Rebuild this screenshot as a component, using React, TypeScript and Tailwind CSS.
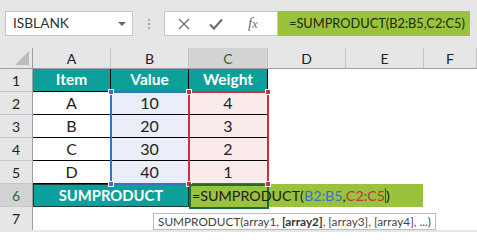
import React from 'react';

const cols = ['A', 'B', 'C', 'D', 'E', 'F'];

const body = [
    ['Item', 'Value', 'Weight'],
    ['A', '10', '4'],
    ['B', '20', '3'],
    ['C', '30', '2'],
    ['D', '40', '1'],
];

function Handle({ x, y, color }: { x: number; y: number; color: string }) {
    return (
        <div
            className={`absolute w-[6px] h-[6px] border border-white ${color}`}
            style={{ left: x - 3, top: y - 3 }}
        />
    );
}

export default function App() {
    return (
        <div className="relative w-[477px] h-[232px] overflow-hidden bg-[#e6e6e6] font-['Lato','Liberation_Sans',sans-serif] text-[#222]">
            {/* Formula bar */}
            <div className="h-[48px] flex items-start pt-[11px] pl-[5px]">
                <div className="w-[128px] h-[25px] bg-white border border-[#c6c6c6] flex items-center justify-between pl-[7px] pr-[6px]">
                    <span className="text-[13.7px] text-[#333]">ISBLANK</span>
                    <span className="w-0 h-0 border-l-[4px] border-r-[4px] border-t-[4px] border-l-transparent border-r-transparent border-t-[#666]" />
                </div>
                <div className="w-[31px] h-[25px] flex flex-col items-center justify-center gap-[2px]">
                    <span className="w-[2px] h-[2px] bg-[#a8a8a8]" />
                    <span className="w-[2px] h-[2px] bg-[#a8a8a8]" />
                    <span className="w-[2px] h-[2px] bg-[#a8a8a8]" />
                </div>
                <div className="w-[114px] h-[25px] bg-white border border-[#c6c6c6] flex items-center pl-[13px] gap-[19px]">
                    <svg width="12" height="12" viewBox="0 0 12 12">
                        <path d="M1 1 L11 11 M11 1 L1 11" stroke="#6f6f6f" strokeWidth="1.3" fill="none" />
                    </svg>
                    <svg width="14" height="12" viewBox="0 0 14 12">
                        <path d="M1 6.5 L5 10.5 L13 1.5" stroke="#6f6f6f" strokeWidth="2.2" fill="none" />
                    </svg>
                    <span className="ml-[6px] font-['Liberation_Serif',serif] italic text-[15px] text-[#6f6f6f] leading-none">
                        f<span className="text-[12px]">x</span>
                    </span>
                </div>
                <div className="w-[192px] h-[25px] bg-[#9bc23c] flex items-center pl-[11px]">
                    <span className="text-[12.8px] text-[#1e2a10] whitespace-nowrap">=SUMPRODUCT(B2:B5,C2:C5)</span>
                </div>
            </div>

            {/* Sheet */}
            <div className="grid grid-cols-[33px_78px_78px_79px_78px_78px_1fr] grid-rows-[21px_repeat(7,23px)] bg-white">
                {/* corner */}
                <div className="bg-[#e6e6e6] border-r border-b border-[#9e9e9e] flex items-end justify-end pr-[3px] pb-[3px]">
                    <svg width="14" height="14" viewBox="0 0 14 14">
                        <path d="M14 0 L14 14 L0 14 Z" fill="#bdbdbd" />
                    </svg>
                </div>
                {cols.map((c) => (
                    <div
                        key={c}
                        className={`flex items-center justify-center text-[14px] border-r border-b border-r-[#c4c4c4] border-b-[#9e9e9e] ${c === 'C' ? 'bg-[#d3d3d3] text-[#1e6b3c]' : 'bg-[#e6e6e6] text-[#222]'}`}
                    >
                        {c}
                    </div>
                ))}

                {body.map((row, r) => (
                    <React.Fragment key={r}>
                        <div className="bg-[#e6e6e6] border-r border-b border-r-[#9e9e9e] border-b-[#c8c8c8] flex items-center justify-center text-[14px]">
                            {r + 1}
                        </div>
                        {row.map((v, i) => (
                            <div
                                key={i}
                                className={`flex items-center justify-center border-r border-b border-black ${
                                    r === 0
                                        ? 'bg-[#0d9f99] text-white font-bold text-[15.5px]'
                                        : i === 1
                                        ? 'bg-[#e9eef8] text-[16px]'
                                        : i === 2
                                        ? 'bg-[#fbeaea] text-[16px]'
                                        : 'bg-white text-[16px]'
                                }`}
                            >
                                {v}
                            </div>
                        ))}
                        <div />
                        <div />
                        <div />
                    </React.Fragment>
                ))}

                {/* row 6 */}
                <div className="bg-[#d3d3d3] border-r border-b border-r-[#9e9e9e] border-b-[#c8c8c8] flex items-center justify-center text-[14px] text-[#1e6b3c]">
                    6
                </div>
                <div className="col-span-2 bg-[#0d9f99] border border-[#1b3b39] flex items-center justify-center text-[14.8px] font-bold text-white">
                    SUMPRODUCT
                </div>
                <div />
                <div />
                <div />
                <div />

                {/* row 7 */}
                <div className="bg-[#e6e6e6] border-r border-r-[#9e9e9e] flex items-center justify-center text-[14px]">
                    7
                </div>
                <div className="col-span-6" />
            </div>

            {/* range outlines */}
            <div className="absolute left-[110px] top-[91px] w-[80px] h-[94px] border-2 border-[#3d6fc4]" />
            <div className="absolute left-[188px] top-[91px] w-[81px] h-[94px] border-2 border-[#c4343c]" />
            <Handle x={111} y={92} color="bg-[#3d6fc4]" />
            <Handle x={111} y={184} color="bg-[#3d6fc4]" />
            <Handle x={189} y={92} color="bg-[#c4343c]" />
            <Handle x={268} y={92} color="bg-[#c4343c]" />
            <Handle x={189} y={184} color="bg-[#c4343c]" />

            {/* active cell in edit mode */}
            <div className="absolute left-[189px] top-[184px] w-[234px] h-[23px] bg-[#9bc23c]" />
            <div className="absolute left-[189px] top-[184px] w-[80px] h-[25px] border-2 border-[#1e6b3c]" />
            <Handle x={268} y={184} color="bg-[#c4343c]" />
            <div className="absolute left-[192px] top-[184px] h-[23px] flex items-center text-[14.3px] text-[#1a1a1a] whitespace-nowrap">
                =SUMPRODUCT(<span className="text-[#3d6fc4]">B2:B5</span>,<span className="text-[#c4343c]">C2:C5</span>
                <span className="inline-block w-px h-[15px] bg-[#4b3a8c]" />)
            </div>

            {/* function tooltip */}
            <div className="absolute left-[153px] top-[213px] h-[17px] px-[4px] bg-white border border-[#bcbcbc] flex items-center text-[11.8px] text-[#444] whitespace-nowrap">
                SUMPRODUCT(array1,&nbsp;<b className="text-[#333]">[array2]</b>, [array3], [array4], ...)
            </div>
        </div>
    );
}
